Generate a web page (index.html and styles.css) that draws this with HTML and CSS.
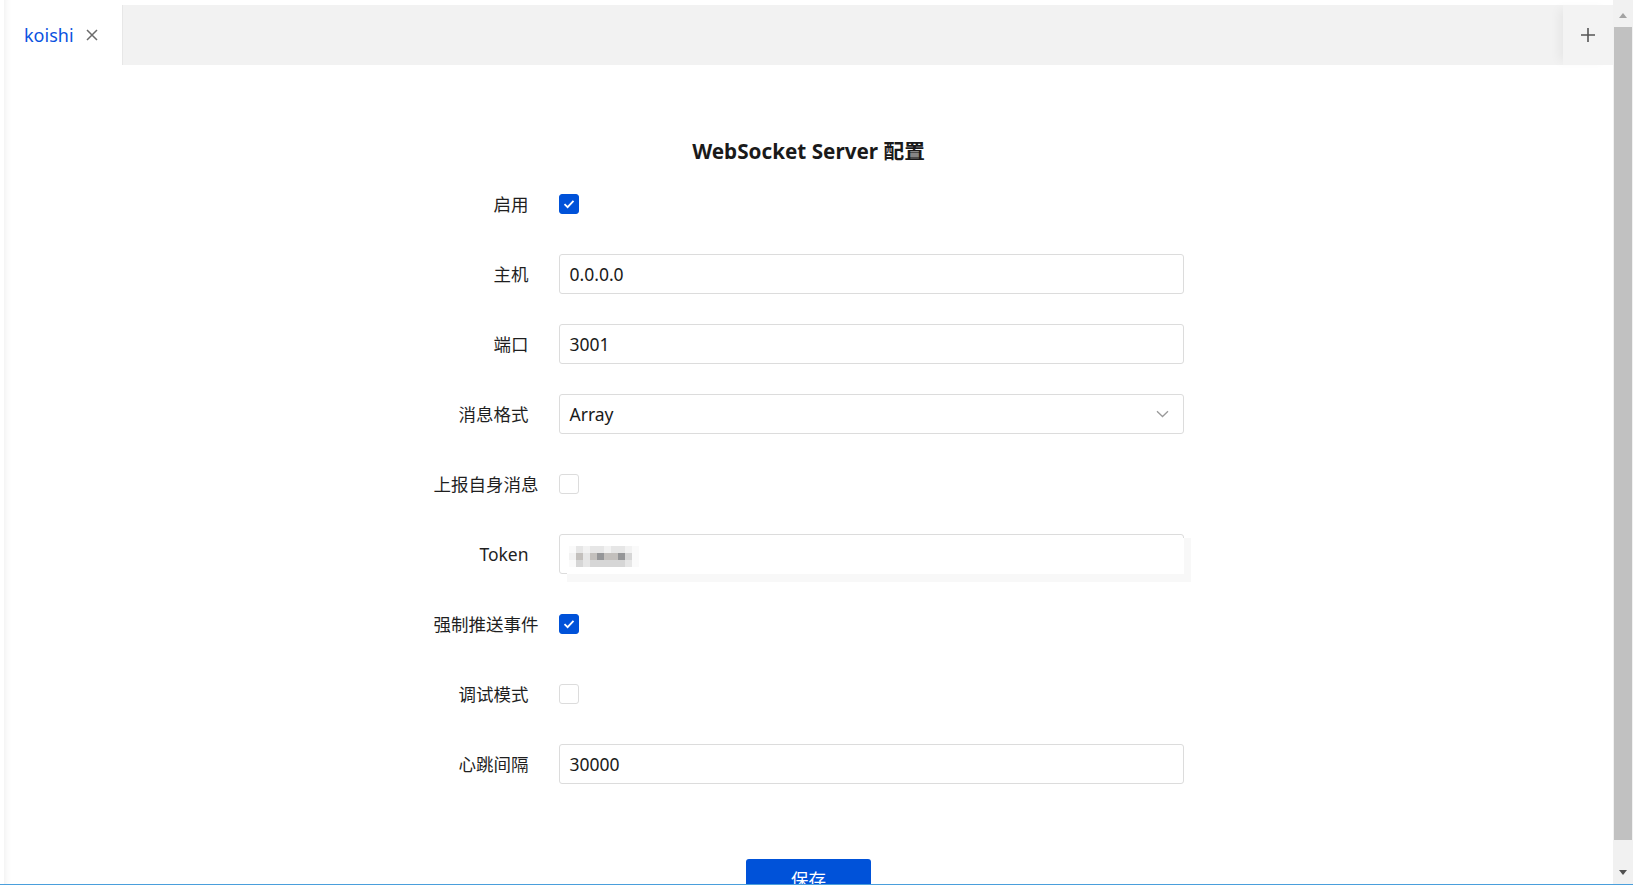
FILE: index.html
```html
<!DOCTYPE html>
<html lang="zh-CN">
<head>
<meta charset="utf-8">
<title>WebSocket Server 配置</title>
<link rel="stylesheet" href="styles.css">
</head>
<body>
<div class="app">
  <div class="window">
    <div class="tabbar">
      <div class="tab">
        <span class="tab-title">koishi</span>
        <svg class="tab-close" width="12" height="12" viewBox="0 0 12 12"><path d="M1 1L11 11M11 1L1 11" stroke="#6b6b6b" stroke-width="1.5" fill="none"/></svg>
      </div>
      <div class="tab-fill"></div>
      <div class="tab-add">
        <svg width="14" height="14" viewBox="0 0 14 14"><path d="M7 0V14M0 7H14" stroke="#555" stroke-width="1.6" fill="none"/></svg>
      </div>
    </div>
    <main class="content">
      <h1 class="title">WebSocket Server 配置</h1>
      <div class="form">
        <div class="row">
          <div class="label">启用</div>
          <span class="checkbox checked"><svg width="12" height="10" viewBox="0 0 12 10"><path d="M1.5 5.2L4.6 8.2L10.5 1.8" stroke="#fff" stroke-width="1.8" fill="none"/></svg></span>
        </div>
        <div class="row">
          <div class="label">主机</div>
          <div class="input">0.0.0.0</div>
        </div>
        <div class="row">
          <div class="label">端口</div>
          <div class="input">3001</div>
        </div>
        <div class="row">
          <div class="label">消息格式</div>
          <div class="input select">Array
            <svg class="chevron" width="13" height="8" viewBox="0 0 13 8"><path d="M1 1.2L6.5 6.5L12 1.2" stroke="#9a9a9a" stroke-width="1.3" fill="none"/></svg>
          </div>
        </div>
        <div class="row">
          <div class="label">上报自身消息</div>
          <span class="checkbox"></span>
        </div>
        <div class="row">
          <div class="label">Token</div>
          <div class="input token">
            <div class="token-cover">
              <div class="blur">
                <i class="b5"></i><i class="b1"></i><i class="b0"></i><i class="b1"></i><i class="b1"></i><i class="b0"></i><i class="b1"></i><i class="b1"></i><i class="b0"></i><i class="b5"></i>
                <i class="b0"></i><i class="b3"></i><i class="b1"></i><i class="b3"></i><i class="b4"></i><i class="b3"></i><i class="b3"></i><i class="b4"></i><i class="b2"></i><i class="b5"></i>
                <i class="b5"></i><i class="b2"></i><i class="b1"></i><i class="b2"></i><i class="b2"></i><i class="b2"></i><i class="b2"></i><i class="b2"></i><i class="b1"></i><i class="b5"></i>
              </div>
            </div>
          </div>
        </div>
        <div class="row">
          <div class="label">强制推送事件</div>
          <span class="checkbox checked"><svg width="12" height="10" viewBox="0 0 12 10"><path d="M1.5 5.2L4.6 8.2L10.5 1.8" stroke="#fff" stroke-width="1.8" fill="none"/></svg></span>
        </div>
        <div class="row">
          <div class="label">调试模式</div>
          <span class="checkbox"></span>
        </div>
        <div class="row">
          <div class="label">心跳间隔</div>
          <div class="input">30000</div>
        </div>
      </div>
      <div class="actions">
        <button class="btn-primary" type="button">保存</button>
      </div>
    </main>
  </div>
  <div class="scrollbar">
    <div class="sb-arrow sb-up"></div>
    <div class="sb-thumb"></div>
    <div class="sb-arrow sb-down"></div>
  </div>
</div>
<div class="bottom-line"></div>
</body>
</html>
```

FILE: styles.css
```css
* { box-sizing: border-box; }

html, body {
  margin: 0;
  height: 885px;
  overflow: hidden;
  background: #fff;
}

body {
  font-family: "Noto Sans", "Noto Sans CJK SC", sans-serif;
  color: #1a1a1a;
}

.app {
  display: flex;
  height: 885px;
}

.window {
  flex: 1;
  margin-left: 4px;
  padding-top: 5px;
  box-shadow: inset 8px 0 6px -6px rgba(0, 0, 0, 0.06);
  display: flex;
  flex-direction: column;
  min-width: 0;
}

.tabbar {
  display: flex;
  height: 60px;
  flex: 0 0 60px;
}

.tab {
  width: 118px;
  display: flex;
  align-items: center;
  padding-left: 20px;
  gap: 12px;
  background: transparent;
}

.tab-title {
  font-size: 18px;
  line-height: 24px;
  color: #0a52e0;
}

.tab-close { display: block; }

.tab-fill {
  flex: 1;
  background: #f2f2f2;
  border-left: 1px solid #e7e7e7;
}

.tab-add {
  width: 50px;
  background: #f3f3f3;
  display: flex;
  align-items: center;
  justify-content: center;
  box-shadow: -8px 0 10px -4px rgba(0, 0, 0, 0.05);
}

.tab-add svg { display: block; }

.content {
  flex: 1;
  display: flex;
  flex-direction: column;
  align-items: center;
}

.title {
  margin: 72px 0 0;
  font-size: 20.7px;
  line-height: 28px;
  font-weight: 700;
  color: #1a1a1a;
}

.form {
  margin-top: 19px;
  width: 750px;
  display: flex;
  flex-direction: column;
  gap: 30px;
}

.row {
  display: flex;
  align-items: center;
  height: 40px;
}

.label {
  width: 95px;
  margin-right: 30px;
  flex: 0 0 95px;
  text-align: right;
  white-space: nowrap;
  font-size: 17.5px;
  line-height: 24px;
  color: #1f1f1f;
}

.input {
  position: relative;
  flex: 0 0 625px;
  width: 625px;
  height: 40px;
  border: 1px solid #dcdcdc;
  border-radius: 3px;
  padding: 0 10px;
  display: flex;
  align-items: center;
  font-size: 17.5px;
  line-height: 24px;
  color: #1a1a1a;
  background: #fff;
}

.select { justify-content: space-between; }

.chevron {
  display: block;
  margin-right: 4px;
}

.checkbox {
  width: 20px;
  height: 20px;
  border: 1px solid #dcdcdc;
  border-radius: 3px;
  background: #fff;
  display: flex;
  align-items: center;
  justify-content: center;
}

.checkbox.checked {
  background: #0052d9;
  border-color: #0052d9;
}

.checkbox svg { display: block; }

.token-cover {
  position: absolute;
  left: 7px;
  top: 3px;
  right: -1px;
  bottom: -1px;
  background: #fff;
  box-shadow: 7px 0 0 #f8f8f8, 0 8px 0 #f8f8f8, 7px 8px 0 #f8f8f8;
}

.blur {
  position: absolute;
  left: 2px;
  top: 8px;
  display: grid;
  grid-template-columns: repeat(10, 7px);
  grid-auto-rows: 7px;
}

.blur i { display: block; }
.b5 { background: #fafafa; }
.b0 { background: #f2f2f2; }
.b1 { background: #e6e6e6; }
.b2 { background: #d6d6d6; }
.b3 { background: #c3c0bd; }
.b4 { background: #959698; }

.actions {
  margin-top: 75px;
  display: flex;
  justify-content: center;
}

.btn-primary {
  width: 125px;
  height: 40px;
  border: none;
  border-radius: 3px;
  background: #0052d9;
  color: #fff;
  font-family: inherit;
  font-size: 17.5px;
  line-height: 24px;
  padding: 0;
}

.scrollbar {
  width: 20px;
  flex: 0 0 20px;
  background: #f1f1f1;
  position: relative;
  display: flex;
  flex-direction: column;
  align-items: center;
}

.sb-arrow {
  width: 0;
  height: 0;
  border-left: 4px solid transparent;
  border-right: 4px solid transparent;
}

.sb-up {
  margin-top: 13px;
  border-bottom: 5px solid #a3a3a3;
}

.sb-thumb {
  margin-top: 9px;
  width: 18px;
  height: 813px;
  background: #c1c1c1;
}

.sb-down {
  margin-top: 30px;
  border-top: 5px solid #505050;
}

.bottom-line {
  position: fixed;
  left: 0;
  right: 0;
  bottom: 0;
  height: 1px;
  background: #4a9fdc;
}
```
